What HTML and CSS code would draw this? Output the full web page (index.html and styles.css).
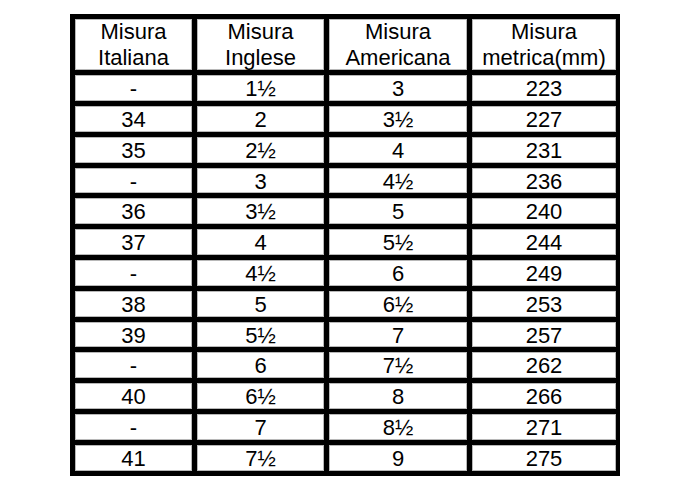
FILE: index.html
```html
<!DOCTYPE html>
<html lang="it">
<head>
<meta charset="utf-8">
<title>Misure</title>
<link rel="stylesheet" href="styles.css">
</head>
<body>
<div class="page">
  <div class="grid">
    <div class="cell head">Misura<br>Italiana</div>
    <div class="cell head">Misura<br>Inglese</div>
    <div class="cell head">Misura<br>Americana</div>
    <div class="cell head">Misura<br>metrica(mm)</div>

    <div class="cell">-</div><div class="cell">1½</div><div class="cell">3</div><div class="cell">223</div>
    <div class="cell">34</div><div class="cell">2</div><div class="cell">3½</div><div class="cell">227</div>
    <div class="cell">35</div><div class="cell">2½</div><div class="cell">4</div><div class="cell">231</div>
    <div class="cell">-</div><div class="cell">3</div><div class="cell">4½</div><div class="cell">236</div>
    <div class="cell">36</div><div class="cell">3½</div><div class="cell">5</div><div class="cell">240</div>
    <div class="cell">37</div><div class="cell">4</div><div class="cell">5½</div><div class="cell">244</div>
    <div class="cell">-</div><div class="cell">4½</div><div class="cell">6</div><div class="cell">249</div>
    <div class="cell">38</div><div class="cell">5</div><div class="cell">6½</div><div class="cell">253</div>
    <div class="cell">39</div><div class="cell">5½</div><div class="cell">7</div><div class="cell">257</div>
    <div class="cell">-</div><div class="cell">6</div><div class="cell">7½</div><div class="cell">262</div>
    <div class="cell">40</div><div class="cell">6½</div><div class="cell">8</div><div class="cell">266</div>
    <div class="cell">-</div><div class="cell">7</div><div class="cell">8½</div><div class="cell">271</div>
    <div class="cell">41</div><div class="cell">7½</div><div class="cell">9</div><div class="cell">275</div>
  </div>
</div>
</body>
</html>
```
FILE: styles.css
```css
html, body {
  margin: 0;
  padding: 0;
  background: #fff;
}
.page {
  padding: 14px 0 0 70px;
}
.grid {
  display: inline-grid;
  grid-template-columns: 117px 127px 138px 144px;
  grid-template-rows: 51.3px repeat(13, 25.8px);
  gap: 5px;
  padding: 5px 4px 5px 5px;
  background: #000;
  font-family: "Liberation Sans", Arial, sans-serif;
  color: #000;
}
.cell {
  background: #fff;
  display: flex;
  align-items: center;
  justify-content: center;
  text-align: center;
  font-size: 22px;
  line-height: 1;
  padding-top: 2px;
  box-sizing: border-box;
  box-shadow: inset 0 0 0 1px #b8b8b8;
}
.head {
  font-size: 22px;
  line-height: 25.3px;
  padding-top: 0;
}
```
